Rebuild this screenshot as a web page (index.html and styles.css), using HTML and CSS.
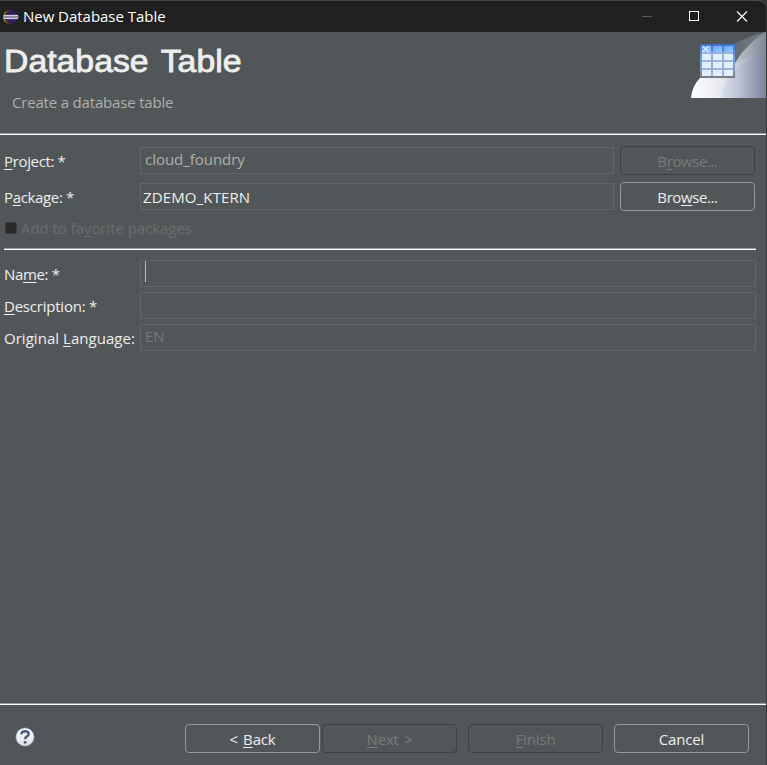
FILE: index.html
```html
<!DOCTYPE html>
<html lang="en">
<head>
<meta charset="utf-8">
<title>New Database Table</title>
<link rel="stylesheet" href="styles.css">
</head>
<body>
<div class="window">
  <header class="titlebar">
    <svg class="app-icon" width="16" height="16" viewBox="0 0 16 16">
      <circle cx="6.800" cy="8" r="6.800" fill="#e8851c"/>
      <circle cx="8.400" cy="8" r="7" fill="#202020"/>
      <circle cx="8.600" cy="8" r="6.500" fill="#2d2161"/>
      <path d="M1.500 5.500h13.500M1.500 10.500h13.500" stroke="#4a3f80" stroke-width=".6"/>
      <path d="M1 6.500h14M1 9.500h14" stroke="#d5d2de"/>
      <path d="M1 8h14.500" stroke="#8d87a8" stroke-width="2"/>
    </svg>
    <span class="title">New Database Table</span>
    <svg class="controls" width="120" height="31" viewBox="0 0 120 31" fill="none">
      <path d="M2 15.500h10" stroke="#5a5a5a"/>
      <rect x="49.500" y="10.500" width="9" height="9" stroke="#fff"/>
      <path d="M97 10.500l10 10M107 10.500l-10 10" stroke="#fff" stroke-width="1.1"/>
    </svg>
  </header>

  <section class="banner">
    <div class="heading">
      <h1>Database Table</h1>
      <p>Create a database table</p>
    </div>
    <svg class="art" width="75" height="66" viewBox="0 0 75 66">
      <defs>
        <linearGradient id="back" x1="0" x2="1"><stop offset="0" stop-color="#646c73"/><stop offset="1" stop-color="#747c84"/></linearGradient>
        <linearGradient id="main" x1="0" x2="1"><stop offset="0" stop-color="#fff"/><stop offset=".4" stop-color="#e2e5ef"/><stop offset=".6" stop-color="#c3c9d5"/><stop offset="1" stop-color="#7d869d"/></linearGradient>
        <linearGradient id="upper" x1="0" x2="1"><stop offset="0" stop-color="#c3c7cf"/><stop offset="1" stop-color="#7f8795"/></linearGradient>
        <linearGradient id="right" x1="0" x2="1"><stop offset="0" stop-color="#d8def0"/><stop offset=".4" stop-color="#bac3d8"/><stop offset="1" stop-color="#78829a"/></linearGradient>
        <linearGradient id="head" x1="0" x2="0" y1="0" y2="1"><stop offset="0" stop-color="#3d70c4"/><stop offset=".4" stop-color="#729ee6"/><stop offset=".75" stop-color="#8797b9"/><stop offset="1" stop-color="#777b7c"/></linearGradient>
        <linearGradient id="cellhead" x1="0" x2="1" y1="0" y2="1"><stop offset="0" stop-color="#68a5fa"/><stop offset="1" stop-color="#9bc8ff"/></linearGradient>
      </defs>
      <path d="M40 14Q56 4 75 0V30H40z" fill="url(#back)"/>
      <path d="M75 0C60 9 50 21 43 33C30 40 17 43 9 46Q1 54 0 66H75z" fill="url(#main)"/>
      <path d="M75 0C60 9 50 21 43 33Q58 24 75 21z" fill="url(#upper)"/>
      <path d="M0 66Q14 46 44 31L61 25Q34 42 30 66z" fill="#fff" opacity=".15"/>
      <path d="M30 66Q32 44 58 27L75 21V66z" fill="url(#right)" opacity=".75"/>
      <rect x="9" y="12" width="35" height="34" fill="url(#head)"/>
      <rect x="11" y="20" width="31" height="24" fill="#9ab2dc"/>
      <g fill="url(#cellhead)"><path d="M11 14h9v6h-9z"/><path d="M22 14h9v6h-9z"/><path d="M33 14h9v6h-9z"/></g>
      <path d="M11 22h9v6h-9zM22 22h9v6h-9zM33 22h9v6h-9zM11 30h9v6h-9zM22 30h9v6h-9zM33 30h9v6h-9zM11 38h9v6h-9zM22 38h9v6h-9zM33 38h9v6h-9z" fill="#e0f0ff"/>
      <path d="M11.500 14l6 6M17.500 14l-6 6" stroke="#d8edff" stroke-width="1.400"/>
    </svg>
  </section>

  <main>
    <div class="row project">
      <label><u>P</u>roject: *</label>
      <div class="field muted">cloud_foundry</div>
      <button class="off" disabled>B<u>r</u>owse...</button>
    </div>
    <div class="row package">
      <label>P<u>a</u>ckage: *</label>
      <div class="field combo">ZDEMO_KTERN</div>
      <button>Bro<u>w</u>se...</button>
    </div>
    <div class="check"><i></i><span>Add to fa<u>v</u>orite packages</span></div>
    <hr>
    <div class="row wide"><label>Na<u>m</u>e: *</label><div class="field"><b class="caret"></b></div></div>
    <div class="row wide"><label class="description"><u>D</u>escription: *</label><div class="field"></div></div>
    <div class="row wide"><label class="language">Original <u>L</u>anguage:</label><div class="field faint">EN</div></div>
  </main>

  <footer>
    <svg class="help" width="20" height="20" viewBox="0 0 20 20">
      <defs><linearGradient id="ball" x1="0" x2="0" y1="0" y2="1"><stop offset="0" stop-color="#fff"/><stop offset="1" stop-color="#dedfe3"/></linearGradient></defs>
      <circle cx="10" cy="10" r="9.300" fill="url(#ball)" stroke="#64718c" stroke-width=".8"/>
      <path d="M6.300 7.300Q6.500 4.200 10 4.200Q13.700 4.200 13.700 7Q13.700 8.500 11.700 9.600Q10.100 10.500 10.100 12.300" fill="none" stroke="#4a5d80" stroke-width="2.400"/>
      <circle cx="10.100" cy="15.200" r="1.500" fill="#4a5d80"/>
    </svg>
    <button class="back">&lt; <u>B</u>ack</button>
    <button class="next off" disabled><u>N</u>ext &gt;</button>
    <button class="finish off" disabled><u>F</u>inish</button>
    <button class="cancel">Cancel</button>
  </footer>
</div>
</body>
</html>
```
FILE: styles.css
```css
* { box-sizing: border-box; }
body {
  margin: 0;
  background: #35393b;
  font: 15px/20px "Open Sans", "Noto Sans", sans-serif;
  color: #eee;
}
.window {
  width: 766px;
  height: 765px;
  display: flex;
  flex-direction: column;
  background: #515658;
  border-top: 1px solid #454545;
  border-radius: 0 8px 0 0;
  overflow: hidden;
}
u {
  text-decoration: underline;
  text-decoration-thickness: 1px;
  text-underline-offset: 2px;
  text-decoration-skip-ink: none;
}
.titlebar {
  height: 31px;
  flex: none;
  display: flex;
  align-items: center;
  background: #202020;
  padding-left: 3px;
}
.title { margin: -2px 0 0 4px; color: #fff; letter-spacing: -0.03px; }
.controls { margin-left: auto; margin-right: 6px; }

.banner {
  height: 103px;
  flex: none;
  display: flex;
  justify-content: space-between;
  background: linear-gradient(#999c9d 50%, #fff 50%) bottom / 100% 2px no-repeat;
}
h1 {
  margin: 11px 0 0 4px;
  font: 31px/38px "Liberation Sans", Arial, sans-serif;
  color: #eee;
  -webkit-text-stroke: 0.8px #eee;
  word-spacing: 3px;
  transform: scaleX(1.09);
  transform-origin: left;
  white-space: nowrap;
}
.heading p { margin: 11px 0 0 12px; color: #adb0ae; letter-spacing: -0.18px; }
.art { flex: none; }

main { flex: 1; padding-top: 11px; }
.row { display: flex; height: 29px; align-items: center; padding-left: 4px; }
.package { margin-top: 7px; }
label { width: 136px; flex: none; white-space: nowrap; letter-spacing: -0.35px; }
.description { letter-spacing: -0.22px; }
.language { letter-spacing: 0.03px; }
.field {
  width: 474px;
  height: 27px;
  flex: none;
  border: 1px solid #646665;
  padding: 1px 4px;
  white-space: nowrap;
}
.combo { padding: 3px 2px; letter-spacing: 0.13px; }
.muted { color: #adb0ae; letter-spacing: -0.03px; }
.faint { color: #737879; }
button {
  width: 135px;
  height: 29px;
  flex: none;
  padding: 1px 0 0;
  border: 1px solid #969998;
  border-radius: 4px;
  background: transparent;
  color: #eee;
  font: inherit;
  letter-spacing: -0.4px;
}
.row button { margin-left: 6px; }
button.off { color: #787c7d; border-color: #3e4040; }
.check { display: flex; height: 20px; margin: 7px 0 0 5px; align-items: center; color: #6b6e6f; letter-spacing: -0.05px; }
.check i { width: 12px; height: 12px; border-radius: 2px; background: #292929; border: 1px solid #3b3c3c; margin-right: 4px; }
hr {
  height: 2px;
  width: 752px;
  margin: 10px 0 10px 4px;
  border: 0;
  background: linear-gradient(#999c9d 50%, #fff 50%);
}
.wide { height: 27px; margin-bottom: 5px; }
.wide .field { width: 616px; }
.caret { display: block; width: 1px; height: 21px; margin-top: -1px; background: #bbb; }

footer {
  height: 62px;
  flex: none;
  display: flex;
  align-items: flex-start;
  padding: 21px 0 0 15px;
  background: linear-gradient(#999c9d 50%, #fff 50%) top / 100% 2px no-repeat;
}
footer button { letter-spacing: -0.15px; }
.help { margin-top: 3px; }
.back { margin-left: 150px; word-spacing: 1.5px; }
.next { margin-left: 2px; word-spacing: 1.5px; }
.finish, .cancel { margin-left: 11px; }
```
